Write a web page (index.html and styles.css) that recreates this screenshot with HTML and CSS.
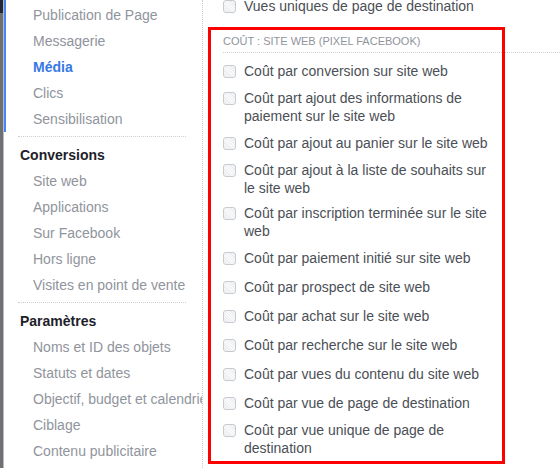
FILE: index.html
```html
<!DOCTYPE html>
<html lang="fr">
<head>
<meta charset="utf-8">
<title>Colonnes</title>
<link rel="stylesheet" href="styles.css">
</head>
<body>
<div class="page">
  <div class="strip"></div>
  <nav class="sidebar">
    <div class="group group-active">
      <div class="item">Publication de Page</div>
      <div class="item">Messagerie</div>
      <div class="item item-current">Média</div>
      <div class="item">Clics</div>
      <div class="item">Sensibilisation</div>
    </div>
    <div class="divider"></div>
    <div class="group">
      <div class="heading">Conversions</div>
      <div class="item">Site web</div>
      <div class="item">Applications</div>
      <div class="item">Sur Facebook</div>
      <div class="item">Hors ligne</div>
      <div class="item">Visites en point de vente</div>
    </div>
    <div class="divider"></div>
    <div class="group">
      <div class="heading">Paramètres</div>
      <div class="item">Noms et ID des objets</div>
      <div class="item">Statuts et dates</div>
      <div class="item">Objectif, budget et calendrier</div>
      <div class="item">Ciblage</div>
      <div class="item">Contenu publicitaire</div>
    </div>
  </nav>
  <main class="main">
    <label class="row row-top"><span class="box"></span><span class="text">Vues uniques de page de destination</span></label>
    <section class="section">
      <div class="section-title">COÛT : SITE WEB (PIXEL FACEBOOK)</div>
      <div class="list">
        <label class="row"><span class="box"></span><span class="text">Coût par conversion sur site web</span></label>
        <label class="row"><span class="box"></span><span class="text">Coût part ajout des informations de paiement sur le site web</span></label>
        <label class="row"><span class="box"></span><span class="text">Coût par ajout au panier sur le site web</span></label>
        <label class="row"><span class="box"></span><span class="text">Coût par ajout à la liste de souhaits sur le site web</span></label>
        <label class="row tight"><span class="box"></span><span class="text">Coût par inscription terminée sur le site web</span></label>
        <label class="row"><span class="box"></span><span class="text">Coût par paiement initié sur site web</span></label>
        <label class="row wide"><span class="box"></span><span class="text">Coût par prospect de site web</span></label>
        <label class="row wide"><span class="box"></span><span class="text">Coût par achat sur le site web</span></label>
        <label class="row wide"><span class="box"></span><span class="text">Coût par recherche sur le site web</span></label>
        <label class="row wide"><span class="box"></span><span class="text">Coût par vues du contenu du site web</span></label>
        <label class="row wide"><span class="box"></span><span class="text">Coût par vue de page de destination</span></label>
        <label class="row"><span class="box"></span><span class="text">Coût par vue unique de page de destination</span></label>
      </div>
    </section>
    <div class="highlight"></div>
  </main>
</div>
</body>
</html>
```
FILE: styles.css
```css
* { box-sizing: border-box; }

html, body {
  margin: 0;
  padding: 0;
  background: #fff;
  height: 100%;
  overflow: hidden;
}

body {
  font-family: "Liberation Sans", Arial, Helvetica, sans-serif;
  font-size: 14px;
}

.page {
  display: flex;
  height: 468px;
}

.strip {
  width: 4px;
  flex: none;
  background: linear-gradient(to bottom, #1f2a36 0, #1f2a36 13px, #6e7073 13px, #6e7073 100%);
  border-right: 1px solid #b9bbbe;
}

.sidebar {
  width: 199px;
  flex: none;
  border-right: 1px dotted #c9ccd1;
  overflow: hidden;
  white-space: nowrap;
}

.group {
  border-left: 2px solid transparent;
}

.group-active {
  border-left-color: #4a86f0;
  padding-top: 2px;
}

.item {
  height: 26px;
  line-height: 26px;
  padding-left: 27px;
  color: #90949c;
}

.item-current {
  color: #3578e5;
  font-weight: bold;
}

.heading {
  height: 26px;
  line-height: 26px;
  padding-left: 14px;
  color: #1d2129;
  font-weight: bold;
}

.divider {
  margin: 4px 16px 5px 14px;
  border-top: 1px dotted #ccd0d5;
}

.main {
  position: relative;
  flex: 1;
  padding-left: 20px;
}

.row {
  display: flex;
  align-items: flex-start;
  gap: 8px;
  line-height: 18px;
  color: #4b4f56;
}

.row-top {
  margin-top: -3px;
}

.box {
  flex: none;
  width: 13px;
  height: 13px;
  margin-top: 3px;
  border: 1px solid #c7cbd1;
  border-radius: 3px;
  background: repeating-linear-gradient(45deg, #eceef0 0, #eceef0 1px, #f9fafb 1px, #f9fafb 2px);
}

.text {
  width: 248px;
}

.section {
  margin-top: 19px;
}

.section-title {
  font-size: 11px;
  line-height: 14px;
  color: #90949c;
  padding-bottom: 4px;
  border-bottom: 1px dotted #ccd0d5;
}

.list {
  display: flex;
  flex-direction: column;
  gap: 9px;
  padding-top: 9px;
}

.list .tight {
  margin-top: -2px;
}

.list .wide {
  margin-top: 2px;
}

.highlight {
  position: absolute;
  left: 5px;
  top: 27px;
  width: 297px;
  height: 437px;
  border: 3px solid #ff0000;
  pointer-events: none;
}
```
